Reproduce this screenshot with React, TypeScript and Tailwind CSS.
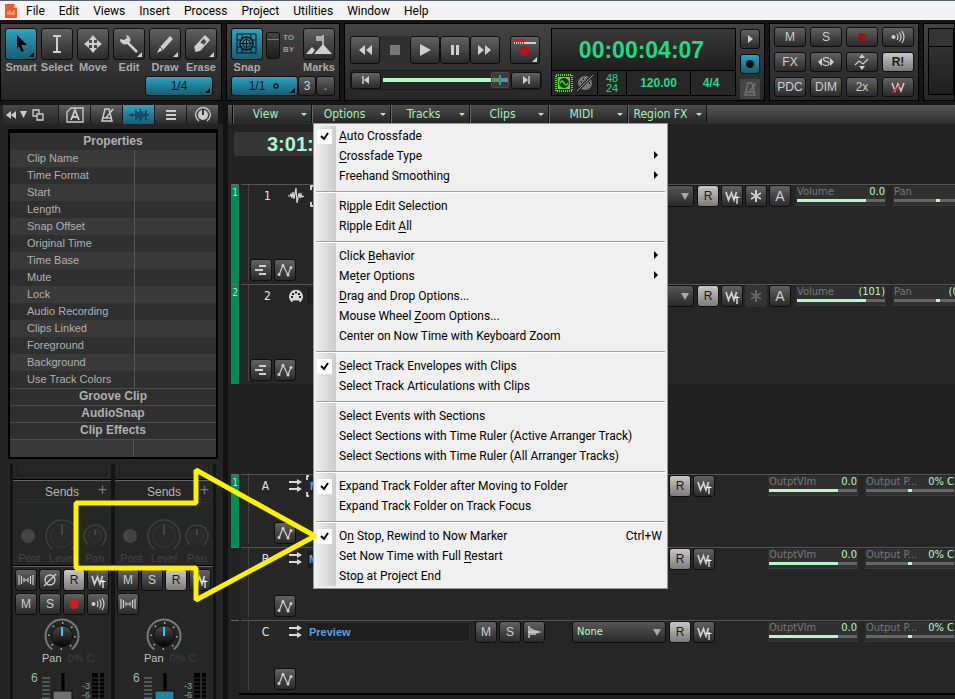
import type { ReactNode } from "react";
import clsx from "clsx";

const BTN =
  "flex items-center justify-center rounded-[3px] border border-[#0e0e0e] bg-linear-to-b from-[#626262] to-[#2a2a2a] text-[#cfcfcf] shrink-0";
const BTN_LIT =
  "flex items-center justify-center rounded-[3px] border border-[#0e0e0e] bg-linear-to-b from-[#c8c8c8] to-[#7c7c7c] text-[#1a1a1a] shrink-0";
const BTN_BLUE =
  "flex items-center justify-center rounded-[3px] border border-[#0e0e0e] bg-linear-to-b from-[#2ea3c1] to-[#165e72] text-[#0b1216] shrink-0";
const PANEL = "border border-black bg-linear-to-b from-[#434343] to-[#262626] shrink-0";
const ARIAL = "font-[family-name:'Liberation_Sans',sans-serif]";
const TAHOMA = "font-[family-name:'DejaVu_Sans_Condensed','Noto_Sans',sans-serif]";
const SEGOE = "font-[family-name:'Roboto','Open_Sans',sans-serif]";

function Icon({ w, h, children }: { w: number; h: number; children: ReactNode }) {
  return (
    <svg
      width={w}
      height={h}
      viewBox={`0 0 ${w} ${h}`}
      fill="none"
      stroke="currentColor"
      className="shrink-0"
      aria-hidden="true"
    >
      {children}
    </svg>
  );
}

/* ---------- icons ---------- */

const Corner = () => <path d="M28 23v5h-5z" fill="currentColor" stroke="none" />;

const SmartIcon = () => (
  <Icon w={30} h={30}>
    <path d="M11 6l10 10h-6l3 6-3 1-2-6-2 3z" fill="#000" stroke="none" />
    <path d="M28 23v5h-5z" fill="#000" stroke="none" />
  </Icon>
);
const SelectIcon = () => (
  <Icon w={30} h={30}>
    <path d="M15 7v16M11 7h3l1 1 1-1h3M11 23h3l1-1 1 1h3" strokeWidth="2" />
  </Icon>
);
const MoveIcon = () => (
  <Icon w={30} h={30}>
    <path d="M15 8v14M8 15h14" strokeWidth="2" />
    <path d="M15 6l4 5h-8zM15 24l4-5h-8zM6 15l5-4v8zM24 15l-5-4v8z" fill="currentColor" stroke="none" />
  </Icon>
);
const WrenchIcon = () => (
  <Icon w={30} h={30}>
    <path d="M13 13l10 10" strokeWidth="2.500" />
    <path d="M6 10l4 1 3-2-1-3a5 5 0 0 1 4 7l-3 2a5 5 0 0 1-7-5z" fill="currentColor" stroke="none" />
    <Corner />
  </Icon>
);
const PencilIcon = () => (
  <Icon w={30} h={30}>
    <path d="M20 7l3 3-10 11-6 3 3-6z" fill="currentColor" stroke="none" />
    <path d="M10 18l3 3" stroke="#3c3c3c" />
    <Corner />
  </Icon>
);
const EraserIcon = () => (
  <Icon w={30} h={30}>
    <path d="M19 7l4 4-9 10-4 1-1-4z" strokeWidth="1.500" />
    <path d="M14 13l4 3-5 6-4-1v-3zM19 7l4 4-2 2-4-4z" fill="currentColor" stroke="none" />
    <Corner />
  </Icon>
);
const SnapIcon = () => (
  <Icon w={30} h={30}>
    <path d="M5 5h19v19H5zM5 11h5M19 11h5M5 18h5M19 18h5M10 5v4M10 20v4M19 5v4M19 20v4" />
    <circle cx="14.500" cy="14.500" r="6.500" strokeWidth="1.500" />
    <circle cx="14.500" cy="14.500" r="4" />
    <path d="M14.500 9v11M9 14.500h11" />
  </Icon>
);
const MarksIcon = () => (
  <Icon w={30} h={30}>
    <path d="M2 25l6-7 3 3-3 4zM10 25l9-10 9 10z" fill="currentColor" stroke="none" />
    <path d="M19 6v10" strokeWidth="1.500" />
    <path d="M12 7h6v5h-6z" fill="#aaa" stroke="none" />
  </Icon>
);
const AutoWrite = () => (
  <Icon w={16} h={16}>
    <path d="M2 4l2.500 8L7.500 5l2.500 7L12.500 4" strokeWidth="1.800" />
    <path d="M13 8v8M10.500 9.500h5" stroke="#fff" strokeWidth="1.200" />
  </Icon>
);
const EchoIcon = () => (
  <Icon w={16} h={16}>
    <circle cx="3.500" cy="8" r="2" fill="currentColor" stroke="none" />
    <path d="M7 5q2 3 0 6M9.500 3.500q3 4.500 0 9M12 2q4 6 0 12" strokeWidth="1.200" />
  </Icon>
);
const RecDot = () => (
  <Icon w={12} h={12}>
    <circle cx="6" cy="6" r="5" fill="#c81e1e" stroke="none" />
  </Icon>
);
const InterleaveIcon = () => (
  <Icon w={18} h={14}>
    <path d="M2 2v10M4.500 3v8M7 5v4M9 6v2M11 5v4M13.500 3v8M16 2v10" strokeWidth="1.200" />
  </Icon>
);
const PhaseIcon = () => (
  <Icon w={14} h={14}>
    <ellipse cx="7" cy="7" rx="5" ry="5" strokeWidth="1.300" />
    <path d="M1 13L13 1" strokeWidth="1.300" />
  </Icon>
);
const LanesIcon = () => (
  <Icon w={16} h={16}>
    <path d="M6 4h7M2 8h8M6 12h7" strokeWidth="2" />
  </Icon>
);
const EnvelopeIcon = () => (
  <Icon w={18} h={18}>
    <path d="M3 14L7 4l5 10 3-8" strokeWidth="1.200" />
    <circle cx="3" cy="13.500" r="1.500" fill="currentColor" stroke="none" />
    <circle cx="7" cy="4.500" r="1.500" fill="currentColor" stroke="none" />
    <circle cx="12" cy="14" r="1.500" fill="currentColor" stroke="none" />
    <circle cx="15" cy="6.500" r="1.500" fill="currentColor" stroke="none" />
  </Icon>
);
const WaveIcon = () => (
  <Icon w={16} h={16}>
    <path d="M0 8h2l1-2 1 4 1-6 1 7 2-11 1 15 2-10 1 5 1-4 1 3 2-1" strokeWidth="1.200" />
  </Icon>
);
const BurstIcon = () => (
  <Icon w={16} h={16}>
    <path d="M3 2v12M5 4v7M7 5v6M9 6v5M11 6.500v3M2 8h13" stroke="#e8e8e8" strokeWidth="1.200" />
  </Icon>
);
const MidiIcon = () => (
  <Icon w={16} h={16}>
    <path d="M4 14.500a7 7 0 1 1 8 0l-1-2H5z" fill="currentColor" stroke="none" />
    <path d="M3 9h2M4 6h2M7 4.500h2M10 6h2M11 9h2" stroke="#222" strokeWidth="1.800" />
  </Icon>
);
const BusIcon = () => (
  <Icon w={16} h={16}>
    <path d="M1 4h10M1 11h10" strokeWidth="2" />
    <path d="M9 1l5 3-5 3zM9 8l5 3-5 3z" fill="currentColor" stroke="none" />
  </Icon>
);
const MetronomeIcon = () => (
  <Icon w={16} h={16}>
    <path d="M6 2h4l3 12H3zM7 11l7-9M4 11h9" strokeWidth="1.500" />
  </Icon>
);

/* ---------- menu bar and control bar ---------- */

const MENUS = ["File", "Edit", "Views", "Insert", "Process", "Project", "Utilities", "Window", "Help"];

function MenuBar() {
  return (
    <nav className={clsx("flex h-5 shrink-0 items-center gap-[14px] border-t border-[#586070] bg-[#f3f3f3] pl-1 text-xs text-black", SEGOE)}>
      <svg width="14" height="16" viewBox="0 0 14 16" className="-mr-1.5" aria-hidden="true">
        <path d="M1 1h9l3 4v10H1z" fill="#ee5a26" />
        <path d="M10 1l3 4h-3z" fill="#f9b99d" />
        <path d="M4 8v4M6 7v5M8 9v3M10 7v5" stroke="#fbd3c3" />
      </svg>
      {MENUS.map((m) => (
        <button key={m}>{m}</button>
      ))}
    </nav>
  );
}

const TOOLS = [
  { name: "Smart", icon: <SmartIcon />, active: true },
  { name: "Select", icon: <SelectIcon /> },
  { name: "Move", icon: <MoveIcon /> },
  { name: "Edit", icon: <WrenchIcon /> },
  { name: "Draw", icon: <PencilIcon /> },
  { name: "Erase", icon: <EraserIcon /> },
];

function Tool({ name, icon, active }: { name: string; icon: ReactNode; active?: boolean }) {
  return (
    <button className="flex w-8 flex-col items-center text-[11px] leading-[15px] font-bold text-[#aaa]">
      <span className={clsx("size-8", active ? BTN_BLUE : BTN)}>{icon}</span>
      {name}
    </button>
  );
}

function ToolsPanel() {
  return (
    <section className={clsx(PANEL, "w-[222px] pt-1 pr-2 pl-1")}>
      <div className="flex gap-1">
        {TOOLS.map((t) => (
          <Tool key={t.name} {...t} />
        ))}
      </div>
      <button className={clsx(BTN_BLUE, "relative mt-px ml-auto h-5 w-[68px] text-xs")}>
        1/4
        <Triangle />
      </button>
    </section>
  );
}

const Triangle = () => (
  <svg width="5" height="5" className="absolute right-0.5 bottom-0.5" aria-hidden="true">
    <path d="M5 0v5H0z" fill="#000" />
  </svg>
);

function SnapPanel() {
  return (
    <section className={clsx(PANEL, "w-[114px] pt-1 pr-1 pl-1")}>
      <div className="flex">
        <Tool name="Snap" icon={<SnapIcon />} active />
        <span className="mt-1 ml-[3px] flex h-[27px] w-[14px] flex-col rounded-[3px] border border-[#111] bg-linear-to-b from-[#444] to-[#1c1c1c] pt-[6px]">
          <span className="h-px bg-[#2f8fe0]" />
        </span>
        <span className="mt-1 ml-[3px] text-[8px] leading-3 font-bold text-[#999]">
          TO
          <br />
          BY
        </span>
        <span className="ml-auto">
          <Tool name="Marks" icon={<MarksIcon />} />
        </span>
      </div>
      <div className="mt-px flex text-xs">
        <button className={clsx(BTN_BLUE, "relative h-5 w-[67px] gap-2")}>
          1/1
          <Icon w={7} h={6}>
            <ellipse cx="3" cy="3" rx="2" ry="2" strokeWidth="1.500" />
          </Icon>
          <Triangle />
        </button>
        <button className={clsx(BTN, "h-5 w-[18px]")}>3</button>
        <button className={clsx(BTN, "h-5 w-[19px]")}>.</button>
      </div>
    </section>
  );
}

function TransportPanel() {
  const transport = [
    { label: "Rewind", d: "M10 5v10l-6-5zM17 5v10l-6-5z" },
    { label: "Stop", d: "M5 5h10v10H5z", off: true },
    { label: "Play", d: "M5 4l11 6-11 6z" },
    { label: "Pause", d: "M6 5h3v10H6zM11 5h3v10h-3z" },
    { label: "Fast forward", d: "M3 5l6 5-6 5zM10 5l6 5-6 5z" },
  ];
  return (
    <section className={clsx(PANEL, "flex w-[421px] pt-1 pl-[5px]")}>
      <div className="w-[192px] pt-2">
        <div className="flex">
          {transport.map((t) => (
            <button
              key={t.label}
              aria-label={t.label}
              className={clsx("h-[28px] w-[30px]", t.off ? "flex items-center justify-center bg-[#303030] text-[#777]" : BTN)}
            >
              <Icon w={20} h={20}>
                <path d={t.d} fill="currentColor" stroke="none" />
              </Icon>
            </button>
          ))}
          <button aria-label="Record mode" className={clsx(BTN, "ml-[10px] h-[28px] w-[30px]")}>
            <Icon w={28} h={26}>
              <path d="M3 3h11" stroke="#e01010" strokeWidth="2" />
              <path d="M3 6h11" strokeDasharray="1 1" strokeWidth="2" />
              <path d="M14 6h11" strokeWidth="2" />
              <circle cx="14" cy="14" r="5" fill="#b81414" stroke="none" />
              <path d="M26 20v5h-5z" fill="currentColor" stroke="none" />
            </Icon>
          </button>
        </div>
        <div className="mt-[6px] flex h-5 items-center rounded-[3px] border border-[#1b1b1b] bg-[#272727]">
          <button aria-label="Go to start" className={clsx(BTN, "h-[17px] w-[30px]")}>
            <Icon w={10} h={10}>
              <path d="M2 1v8" strokeWidth="1.500" />
              <path d="M8 1v8L3 5z" fill="currentColor" stroke="none" />
            </Icon>
          </button>
          <div className="mx-0.5 flex flex-1 items-center">
            <span className="h-1 flex-1 bg-[#b5f9c8]" />
            <span className="flex h-4 w-[18px] items-center justify-center rounded-[2px] border border-[#4a4a4a] bg-[#3a3a3a]">
              <span className="flex h-1 w-full items-center justify-center bg-[#6f8f7c]">
                <span className="h-[10px] w-0.5 bg-[#13a0bd]" />
              </span>
            </span>
          </div>
          <button aria-label="Go to end" className={clsx(BTN, "h-[17px] w-[30px]")}>
            <Icon w={10} h={10}>
              <path d="M8 1v8" strokeWidth="1.500" />
              <path d="M2 1v8l5-4z" fill="currentColor" stroke="none" />
            </Icon>
          </button>
        </div>
      </div>
      <div className="ml-[9px] flex h-[68px] w-[185px] flex-col border border-black bg-black text-[#1fdc83]">
        <div className="flex flex-1 items-center justify-center bg-linear-to-b from-[#383838] to-[#1e1e1e] pr-1 text-[23px] leading-6 font-bold">
          00:00:04:07
        </div>
        <div className="mt-px flex h-6 gap-px text-xs">
          <div className="flex w-[45px] items-center justify-center gap-[3px] bg-[#272727]">
            <Icon w={18} h={18}>
              <rect x="1" y="1" width="16" height="16" stroke="#4fe01c" strokeDasharray="1 1" strokeWidth="2" />
              <rect x="3" y="3" width="12" height="12" fill="#4fe01c" stroke="none" />
              <circle cx="9" cy="9" r="5" fill="#123308" stroke="none" />
              <path d="M5 9q2-4 4 0t4 0" stroke="#4fe01c" strokeWidth="1.300" />
            </Icon>
            <Icon w={18} h={18}>
              <circle cx="9" cy="9" r="7" fill="#777" stroke="none" />
              <path d="M5 8h1M7 5h1M11 5h1M13 9h1" stroke="#222" strokeWidth="2" />
              <path d="M1 17L17 1" stroke="#222" strokeWidth="3" />
              <path d="M1 17L17 1" stroke="#999" />
            </Icon>
          </div>
          <div className="flex w-7 flex-col items-center justify-center bg-[#272727] text-[11px] leading-[10px]">
            <span>48</span>
            <span>24</span>
          </div>
          <div className="flex flex-1 items-center justify-center bg-[#272727] font-bold">120.00</div>
          <div className="flex w-11 items-center justify-center bg-[#272727] pr-1 font-bold">4/4</div>
        </div>
      </div>
      <div className="ml-1 flex flex-col gap-[5px] pt-px">
        <button aria-label="Play loop" className={clsx(BTN, "size-5")}>
          <Icon w={8} h={8}>
            <path d="M2 0l5 4-5 4z" fill="currentColor" stroke="none" />
          </Icon>
        </button>
        <button aria-label="Auto punch" className={clsx(BTN_BLUE, "size-5")}>
          <Icon w={10} h={10}>
            <circle cx="5" cy="5" r="4" fill="currentColor" stroke="none" />
          </Icon>
        </button>
        <button aria-label="Metronome" className="flex size-5 items-center justify-center bg-[#444] text-[#707070]">
          <MetronomeIcon />
        </button>
      </div>
    </section>
  );
}

function MixPanel() {
  const cells: { key: string; node: ReactNode; lit?: boolean }[] = [
    { key: "mute", node: "M" },
    { key: "solo", node: "S" },
    {
      key: "arm",
      node: (
        <Icon w={10} h={10}>
          <circle cx="5" cy="5" r="4" fill="#a01010" stroke="none" />
        </Icon>
      ),
    },
    { key: "echo", node: <EchoIcon /> },
    { key: "fx", node: "FX" },
    {
      key: "exclusive",
      node: (
        <>
          <Icon w={5} h={10}>
            <path d="M5 1v8L1 5z" fill="currentColor" stroke="none" />
          </Icon>
          S
          <Icon w={5} h={10}>
            <path d="M0 1v8l4-4z" fill="currentColor" stroke="none" />
          </Icon>
        </>
      ),
    },
    {
      key: "automation",
      node: (
        <Icon w={16} h={16}>
          <path d="M5 4l3-4 3 4zM5 12l3 4 3-4z" fill="currentColor" stroke="none" />
          <path d="M1 11l4-4 4 3 5-5" strokeWidth="1.300" />
        </Icon>
      ),
    },
    { key: "read", node: "R!", lit: true },
    { key: "pdc", node: "PDC" },
    { key: "dim", node: "DIM" },
    { key: "2x", node: "2x" },
    {
      key: "write",
      node: (
        <Icon w={16} h={16}>
          <path d="M2 4l3 8 3-7 3 7 3-8" strokeWidth="1.500" />
          <path d="M2 14L14 2" stroke="#e02020" strokeWidth="1.500" />
        </Icon>
      ),
    },
  ];
  return (
    <section className={clsx(PANEL, "grid w-[150px] grid-cols-4 grid-rows-[20px_20px_20px] gap-x-1 gap-y-[5px] px-1 pt-[3px] text-xs")}>
      {cells.map((c) => (
        <button key={c.key} aria-label={c.key} className={c.lit ? clsx(BTN_LIT, "font-bold") : BTN}>
          {c.node}
        </button>
      ))}
    </section>
  );
}

function ControlBar() {
  return (
    <header className={clsx("flex h-[85px] shrink-0 gap-1 overflow-hidden bg-[#161616] pt-[3px] pb-1", ARIAL)}>
      <ToolsPanel />
      <SnapPanel />
      <TransportPanel />
      <MixPanel />
      <section className={clsx(PANEL, "min-w-8 flex-1 pt-1 pb-[5px] pl-1")}>
        <div className="h-full border border-black bg-linear-to-b from-[#383838] to-[#1e1e1e]">
          <div className="h-[18px] border-b border-black bg-[#353535]" />
        </div>
      </section>
    </header>
  );
}

/* ---------- inspector ---------- */

const PROPERTIES = [
  "Clip Name",
  "Time Format",
  "Start",
  "Length",
  "Snap Offset",
  "Original Time",
  "Time Base",
  "Mute",
  "Lock",
  "Audio Recording",
  "Clips Linked",
  "Foreground",
  "Background",
  "Use Track Colors",
];

const INSPECTOR_TABS = [
  {
    name: "Arpeggiator",
    icon: (
      <Icon w={18} h={16}>
        <path d="M5 1h12v14H1V5z" strokeWidth="1.300" />
        <path d="M5 13l4-10 4 10M6.500 10h5" strokeWidth="1.800" />
      </Icon>
    ),
  },
  { name: "Track", icon: <MetronomeIcon /> },
  {
    name: "Clip",
    active: true,
    icon: (
      <Icon w={20} h={16}>
        <path d="M1 7v2M3 6v4M5 7v2M7 3v10M9 5v6M11 2v12M13 4v8M15 6v4M17 3v10M19 7v2" strokeWidth="1.200" />
      </Icon>
    ),
  },
  {
    name: "List",
    icon: (
      <Icon w={14} h={14}>
        <path d="M2 3h10M2 7h10M2 11h10" strokeWidth="2" />
      </Icon>
    ),
  },
  {
    name: "ProChannel",
    icon: (
      <Icon w={16} h={16}>
        <path d="M4 14a7.300 7.300 0 1 1 8 0" strokeWidth="1.300" />
        <circle cx="8" cy="8" r="5" fill="currentColor" stroke="none" />
        <path d="M8 2v6" stroke="#333" strokeWidth="2" />
      </Icon>
    ),
  },
];

function InspectorTabs() {
  return (
    <div className="flex h-[19px] shrink-0 bg-[#161616] text-[#ccc]">
      <div className="mr-px flex w-[55px] items-center justify-center gap-1 bg-linear-to-b from-[#484848] to-[#282828] pr-3">
        <Icon w={10} h={8}>
          <path d="M5 0v8L0 4zM10 0v8L5 4z" fill="currentColor" stroke="none" />
        </Icon>
        <Icon w={8} h={7}>
          <path d="M0 0h7l-3.500 7z" fill="currentColor" stroke="none" />
        </Icon>
        <Icon w={12} h={12}>
          <path d="M1 1h6v6H1z" strokeWidth="1.300" />
          <path d="M5 5h6v6H5z" fill="#383838" strokeWidth="1.300" />
        </Icon>
      </div>
      {INSPECTOR_TABS.map((t) => (
        <button
          key={t.name}
          aria-label={t.name}
          className={clsx(
            "mr-px flex w-[31px] items-center justify-center",
            t.active
              ? "bg-linear-to-b from-[#2ea3c1] to-[#165e72] text-[#0b3340]"
              : "bg-linear-to-b from-[#606060] to-[#2a2a2a]"
          )}
        >
          {t.icon}
        </button>
      ))}
    </div>
  );
}

function Properties() {
  return (
    <div className="mt-[5px] mr-[5px] ml-[5px] shrink-0 border-2 border-t-4 border-black bg-[#2f2f2f] text-[11px] leading-[17px] text-[#b0b0b0]">
      <h2 className="h-[17px] text-center text-xs leading-4 font-bold">Properties</h2>
      <table className="w-full border-collapse">
        <tbody>
          {PROPERTIES.map((p) => (
            <tr key={p} className="odd:bg-[#393939]">
              <th scope="row" className="h-[17px] w-[124px] border-r border-[#575757] p-0 pl-[17px] text-left font-normal">
                {p}
              </th>
              <td />
            </tr>
          ))}
        </tbody>
      </table>
      {["Groove Clip", "AudioSnap", "Clip Effects"].map((s) => (
        <h3 key={s} className="h-[17px] border-y border-t-[#4c4c4c] border-b-transparent text-center text-xs leading-[15px] font-bold">
          {s}
        </h3>
      ))}
      <div className="h-[18px] border-t border-[#4c4c4c] bg-[#393939]">
        <div className="h-full w-[124px] border-r border-[#575757]" />
      </div>
    </div>
  );
}

function SendKnob({ size, label }: { size: number; label: string }) {
  const c = size / 2;
  return (
    <svg width={size} height={size} viewBox={`0 0 ${size} ${size}`} role="img" aria-label={label}>
      <circle
        cx={c}
        cy={c}
        r={c - 2}
        fill="none"
        stroke="#3a3a3a"
        strokeWidth="2"
        pathLength={100}
        strokeDasharray="80 20"
        transform={`rotate(126 ${c} ${c})`}
      />
      <circle cx={c} cy={c} r={c - 6} fill="#2a2a2a" stroke="#353535" />
      <path d={`M${c} 7V${c - 1}`} stroke="#505050" strokeWidth="1.500" />
    </svg>
  );
}

function PanKnob() {
  return (
    <svg width="38" height="35" viewBox="0 0 38 35" role="img" aria-label="Pan">
      <defs>
        <linearGradient id="knob" x1="0" y1="0" x2="0" y2="1">
          <stop offset="0" stopColor="#4a4a4a" />
          <stop offset="1" stopColor="#050505" />
        </linearGradient>
      </defs>
      <circle
        cx="19"
        cy="19"
        r="16.500"
        fill="none"
        stroke="#737b7a"
        strokeWidth="2"
        pathLength={100}
        strokeDasharray="80 20"
        transform="rotate(126 19 19)"
      />
      <circle
        cx="19"
        cy="19"
        r="13"
        fill="none"
        stroke="#999"
        strokeWidth="2"
        pathLength={80}
        strokeDasharray="1.500 8.500"
      />
      <circle cx="19" cy="19" r="10.500" fill="url(#knob)" stroke="#111" />
      <path d="M19 10v9" stroke="#16d4f5" strokeWidth="2" />
    </svg>
  );
}

function Strip({ audio }: { audio?: boolean }) {
  const sq = "h-[22px] w-[22px]";
  return (
    <div className="w-[98px] bg-[#262626]">
      <div className="mx-1 h-3 border border-t-0 border-[#1b1b1b]" />
      <div className="mt-1 flex h-[22px] items-center border-t border-[#646464] pl-8 text-xs text-[#b5b5b5] shadow-[0_-1px_#000]">
        Sends
        <span className="mr-1 mb-1 ml-auto text-base leading-3 text-[#857587]">+</span>
      </div>
      <div className="h-4 border-t border-[#303030] bg-[#232726]" />
      <div className="flex h-[31px] items-center justify-between pt-1 pr-[3px] pl-2">
        <span className="size-[14px] rounded-full bg-[#444]" />
        <span className="flex items-center gap-0.5">
          <SendKnob size={36} label="Send level" />
          <SendKnob size={26} label="Send pan" />
        </span>
      </div>
      <div className="mt-0.5 grid h-[14px] grid-cols-3 items-center text-center text-[11px] leading-[14px] text-[#454545]">
        <span>Post</span>
        <span>Level</span>
        <span>Pan</span>
      </div>
      <div className="mt-px border-t border-[#646464] pt-0.5 pl-0.5 text-xs shadow-[0_-1px_#000]">
        <div className="flex gap-0.5">
          {audio ? (
            <>
              <button aria-label="Interleave" className={clsx(BTN, sq)}><InterleaveIcon /></button>
              <button aria-label="Phase" className={clsx(BTN, sq)}><PhaseIcon /></button>
            </>
          ) : (
            <>
              <button className={clsx(BTN, sq)}>M</button>
              <button className={clsx(BTN, sq)}>S</button>
            </>
          )}
          <button className={clsx(BTN_LIT, sq)}>R</button>
          <button aria-label="Write automation" className={clsx(BTN, sq)}><AutoWrite /></button>
        </div>
        <div className="mt-0.5 flex gap-0.5">
          {audio ? (
            <>
              <button className={clsx(BTN, sq)}>M</button>
              <button className={clsx(BTN, sq)}>S</button>
              <button aria-label="Record arm" className={clsx(BTN, sq)}><RecDot /></button>
              <button aria-label="Input echo" className={clsx(BTN, sq)}><EchoIcon /></button>
            </>
          ) : (
            <button aria-label="Interleave" className={clsx(BTN, sq)}><InterleaveIcon /></button>
          )}
        </div>
      </div>
      <div className="mt-0.5 flex justify-center">
        <PanKnob />
      </div>
      <div className="flex h-3 items-center gap-[6px] pl-[29px] text-[11px] leading-3 text-[#c0c0c0]">
        Pan
        <span className="text-[#3d3d3d]">0% C</span>
      </div>
      <Fader blue={!audio} />
    </div>
  );
}

function Fader({ blue }: { blue?: boolean }) {
  return (
    <div className="mt-2 flex h-7 pl-[18px] text-[10px] leading-[9px] text-[#8fa09a]">
      <span className="h-3 pt-0.5 text-xs leading-[9px] text-[#9fbcb4]">6</span>
      <Icon w={66} h={28}>
        <path d="M4 6h8M4 10h8M4 14h8M4 18h8M4 22h8M4 26h8" stroke="#6f8a83" />
        <path d="M25 1v27" stroke="#000" strokeWidth="3" />
        <rect x="15" y="19" width="19" height="9" fill={blue ? "#1f87a5" : "#707070"} stroke="#111" />
        <path d="M54 1h6v27h-6zM62 1h6v27h-6z" fill="#000" stroke="none" />
        <path d="M54 6h12M54 10h12M54 14h12M54 18h12M54 22h12M54 26h12" stroke="#333" />
        <text x="44" y="17" fontSize="9" fill="#8fa09a" stroke="none">-3</text>
        <text x="44" y="26" fontSize="9" fill="#8fa09a" stroke="none">-6</text>
      </Icon>
    </div>
  );
}

function Inspector() {
  return (
    <aside className={clsx("flex w-[223px] shrink-0 flex-col overflow-hidden bg-[#242424] pl-[3px]", ARIAL)}>
      <InspectorTabs />
      <Properties />
      <div className="mt-[5px] ml-[7px] flex flex-1 gap-1 self-start border-x-3 border-[#141414] bg-[#141414]">
        <Strip audio />
        <Strip />
      </div>
    </aside>
  );
}

/* ---------- options menu ---------- */

type Item = { label: string; checked?: boolean; sub?: boolean; keys?: string };

// "&" stands before the access key letter
const OPTIONS: Item[][] = [
  [
    { label: "&Auto Crossfade", checked: true },
    { label: "&Crossfade Type", sub: true },
    { label: "Freehand Smoothing", sub: true },
  ],
  [{ label: "Ri&pple Edit Selection" }, { label: "Ripple Edit &All" }],
  [
    { label: "Click &Behavior", sub: true },
    { label: "Me&ter Options", sub: true },
    { label: "&Drag and Drop Options..." },
    { label: "Mouse Wheel &Zoom Options..." },
    { label: "Center on Now Time with Keyboard Zoom" },
  ],
  [
    { label: "&Select Track Envelopes with Clips", checked: true },
    { label: "Select Track Articulations with Clips" },
  ],
  [
    { label: "Select Events with Sections" },
    { label: "Select Sections with Time Ruler (Active Arranger Track)" },
    { label: "Select Sections with Time Ruler (All Arranger Tracks)" },
  ],
  [
    { label: "Expand Track Folder after Moving to Folder", checked: true },
    { label: "Expand Track Folder on Track Focus" },
  ],
  [
    { label: "O&n Stop, Rewind to Now Marker", checked: true, keys: "Ctrl+W" },
    { label: "Set Now Time with Full &Restart" },
    { label: "Sto&p at Project End" },
  ],
];

function AccessLabel({ text }: { text: string }) {
  const i = text.indexOf("&");
  if (i < 0) return <span>{text}</span>;
  return (
    <span>
      {text.slice(0, i)}
      <u className="underline-offset-2">{text[i + 1]}</u>
      {text.slice(i + 2)}
    </span>
  );
}

function OptionsMenu() {
  return (
    <div
      role="menu"
      className={clsx("absolute top-full left-0 z-10 w-[355px] border border-[#979797] bg-[#f0f0f0] px-0.5 py-0.5 text-xs text-black", SEGOE)}
    >
      {OPTIONS.map((group, g) => (
        <div key={g}>
          {g > 0 && (
            <div className="h-[10px] bg-linear-to-r from-[#eee] to-[#cdcdcd] bg-[length:20px_100%] bg-no-repeat pt-[5px]">
              <div className="h-0.5 border-t border-[#a0a0a0] bg-white" />
            </div>
          )}
          {group.map((item) => (
            <button
              key={item.label}
              role={item.checked ? "menuitemcheckbox" : "menuitem"}
              aria-checked={item.checked}
              className="flex h-5 w-full items-center bg-linear-to-r from-[#eee] to-[#cdcdcd] bg-[length:20px_100%] bg-no-repeat pr-[3px] text-left"
            >
              <span className="w-[23px] shrink-0 pl-px">
                {item.checked && (
                  <span className="flex size-[15px] items-center justify-center bg-white">
                    <Icon w={9} h={9}>
                      <path d="M1 4l3 3 4-6" strokeWidth="2" />
                    </Icon>
                  </span>
                )}
              </span>
              <AccessLabel text={item.label} />
              <span className="ml-auto">{item.keys}</span>
              {item.sub && (
                <svg width="4" height="8" className="mr-1 mb-0.5" aria-hidden="true">
                  <path d="M0 0l4 4-4 4z" />
                </svg>
              )}
            </button>
          ))}
        </div>
      ))}
    </div>
  );
}

/* ---------- track view ---------- */

function TrackMenuBar() {
  return (
    <div className={clsx("flex h-[18px] shrink-0 bg-linear-to-b from-[#565656] to-[#303030] text-xs text-[#a9f0bb]", TAHOMA)}>
      <span className="w-[5px] border-r border-black" />
      {["View", "Options", "Tracks", "Clips", "MIDI", "Region FX"].map((name) => (
        <div key={name} className="relative w-[79px] border-r border-l border-r-[#111] border-l-[#666]">
          <button className="flex h-full w-full items-center bg-linear-to-b from-[#4c4c4c] to-[#262626] pr-1">
            <span className="flex-1 pr-1 text-center whitespace-nowrap">{name}</span>
            <Icon w={6} h={3}>
              <path d="M0 0h6L3 3z" fill="currentColor" stroke="none" />
            </Icon>
          </button>
          {name === "Options" && <OptionsMenu />}
        </div>
      ))}
    </div>
  );
}

function Meter({ label, value, fill }: { label: string; value: string; fill?: number }) {
  return (
    <div className="h-5 w-[90px] shrink-0 border-b border-[#3a3a3a] bg-[#303030] px-px">
      <div className="flex justify-between text-[11px] leading-3 whitespace-nowrap text-[#777]">
        {label}
        <span className="text-[#b5f9c8]">{value}</span>
      </div>
      <div className="mt-px flex h-[3px] bg-[#666]">
        {fill ? (
          <span className="bg-[#b5f9c8]" style={{ width: `${fill}%` }} />
        ) : (
          <span className="mx-auto w-1 bg-[#b5f9c8]" />
        )}
      </div>
    </div>
  );
}

type Track = {
  id: string;
  kind: "audio" | "midi" | "bus";
  name: string;
  tag?: string;
  selected?: boolean;
  volume: string;
  pan: string;
};

const TRACKS: Track[] = [
  { id: "1", kind: "audio", name: "", tag: "1", selected: true, volume: "0.0", pan: "0% C" },
  { id: "2", kind: "midi", name: "", tag: "2", volume: "(101)", pan: "(0% C)" },
];
const BUSES: Track[] = [
  { id: "A", kind: "bus", name: "Master", tag: "1", selected: true, volume: "0.0", pan: "0% C" },
  { id: "B", kind: "bus", name: "Metronome", volume: "0.0", pan: "0% C" },
  { id: "C", kind: "bus", name: "Preview", volume: "0.0", pan: "0% C" },
];

function TrackRow({ track }: { track: Track }) {
  const bus = track.kind === "bus";
  const sq = "size-[22px]";
  return (
    <div className={clsx("flex shrink-0 gap-0.5 pl-[3px]", bus ? "h-[73px]" : "h-[100px]")}>
      <div
        className={clsx(
          "w-2 shrink-0 border-t border-[#6a6a6a] pt-0.5 text-center text-[10px] leading-3 text-[#a4e8c8]",
          track.tag && "bg-[#058a5a]",
          TAHOMA
        )}
      >
        {track.tag}
      </div>
      <div className="flex min-w-0 flex-1 border-t border-[#555] bg-[#262626] pb-[3px] pl-[7px]">
        <div className="flex min-w-0 flex-1 flex-col justify-between border-l border-[#444]">
          <div className={clsx("flex items-start text-xs", ARIAL)}>
            <span className={clsx("w-[37px] shrink-0 text-center leading-[22px] text-[#e4e4e4]", bus && "pr-1", TAHOMA)}>
              {track.id}
            </span>
            <span className="mt-[3px] flex w-5 shrink-0 justify-center text-[#d8d8d8]">
              {track.kind === "audio" && <WaveIcon />}
              {track.kind === "midi" && <MidiIcon />}
              {bus && <BusIcon />}
            </span>
            <span className={clsx("flex h-[22px] w-[164px] shrink-0 items-center", track.kind === "audio" && "pl-1")}>
              {track.selected && (
                <Icon w={3} h={22}>
                  <path d="M3 1H1v4M1 17v4h2" stroke="#fff" strokeWidth="1.500" />
                </Icon>
              )}
              <input
                aria-label={`Name of track ${track.id}`}
                defaultValue={track.name}
                className={clsx(
                  "h-5 min-w-0 flex-1 rounded-[3px] border border-[#2e2e2e] text-[11px] font-bold text-[#5f9fe0] outline-none",
                  track.selected ? "px-0" : "px-0.5",
                  track.kind === "audio" ? "bg-[#a9ecc4]" : "bg-[#1e1e1e]"
                )}
              />
            </span>
            <div className="ml-[5px] flex gap-0.5">
              <button className={clsx(BTN, sq)}>M</button>
              <button className={clsx(BTN, sq)}>S</button>
              {bus ? (
                <button aria-label="Waveform preview" className={clsx(BTN, sq)}><BurstIcon /></button>
              ) : (
                <>
                  <button aria-label="Record arm" className={clsx(BTN, sq)}><RecDot /></button>
                  <button aria-label="Input echo" className={clsx(BTN, sq)}><EchoIcon /></button>
                </>
              )}
            </div>
            <div className={clsx("relative w-[94px] shrink-0", bus ? "ml-[27px]" : "ml-[31px]")}>
              <select
                aria-label={`Output of track ${track.id}`}
                className={clsx(
                  "h-[22px] w-full appearance-none rounded-[3px] border border-[#0e0e0e] bg-linear-to-b from-[#565656] to-[#2a2a2a] px-1 text-[11px] text-[#b5f9c8]",
                  TAHOMA
                )}
              >
                <option>None</option>
              </select>
              <svg width="8" height="7" className="absolute top-2 right-[5px]" aria-hidden="true">
                <path d="M0 0h8L4 7z" fill="#a8a8a8" />
              </svg>
            </div>
            <div className="ml-[3px] flex shrink-0 gap-0.5">
              <button className={clsx(BTN_LIT, sq)}>R</button>
              <button aria-label="Write automation" className={clsx(BTN, sq)}><AutoWrite /></button>
              {!bus && (
                <>
                  <button
                    aria-label="Freeze"
                    className={clsx(sq, track.kind === "midi" ? "flex items-center justify-center rounded-[3px] bg-[#333] text-[#666]" : BTN)}
                  >
                    <Icon w={14} h={14}>
                      <path d="M7 1v12M2 4l10 6M12 4L2 10" strokeWidth="2" />
                    </Icon>
                  </button>
                  <button className={clsx(BTN, sq, "text-sm text-[#aaa]")}>A</button>
                </>
              )}
            </div>
            <div className={clsx("flex shrink-0 gap-[7px] pt-px", bus ? "ml-[53px]" : "ml-[5px]", TAHOMA)}>
              <Meter label={bus ? "OutptVlm" : "Volume"} value={track.volume} fill={78} />
              <Meter label={bus ? "Output P..." : "Pan"} value={track.pan} />
            </div>
          </div>
          <div className="flex gap-0.5 pl-px">
            {bus ? (
              <span className="w-[22px]" />
            ) : (
              <button aria-label="Take lanes" className={clsx(BTN, sq)}><LanesIcon /></button>
            )}
            <button aria-label="Automation lanes" className={clsx(BTN, sq)}><EnvelopeIcon /></button>
          </div>
        </div>
      </div>
    </div>
  );
}

function TrackView() {
  return (
    <main className="flex min-w-0 flex-1 flex-col bg-[#222]">
      <TrackMenuBar />
      <div className="h-[61px] shrink-0 border-t border-[#2e2e2e] pt-2 pl-[6px]">
        <div className={clsx("h-6 w-[120px] rounded-[3px] bg-[#353535] pl-[33px] text-xl leading-6 font-bold text-[#a9f7cf]", ARIAL)}>
          3:01:000
        </div>
      </div>
      {TRACKS.map((t) => (
        <TrackRow key={t.id} track={t} />
      ))}
      <div className="h-[90px] shrink-0 bg-[#202020]" />
      {BUSES.map((t) => (
        <TrackRow key={t.id} track={t} />
      ))}
      <div className="ml-[11px] flex-1 border-t-2 border-black bg-[#202020]" />
    </main>
  );
}

function Pointer() {
  return (
    <svg width="320" height="699" className="pointer-events-none absolute top-0 left-0 z-20" aria-hidden="true">
      <path
        d="M76 503H196V470L315 536L196 600V568H76Z"
        fill="none"
        stroke="#fff200"
        strokeWidth="5"
        strokeLinejoin="bevel"
      />
    </svg>
  );
}

export default function App() {
  return (
    <div className="relative flex h-screen flex-col overflow-hidden bg-[#222]">
      <MenuBar />
      <ControlBar />
      <div className="flex min-h-0 flex-1">
        <Inspector />
        <div className="w-[5px] shrink-0 bg-[#121212]" />
        <TrackView />
      </div>
      <Pointer />
    </div>
  );
}
